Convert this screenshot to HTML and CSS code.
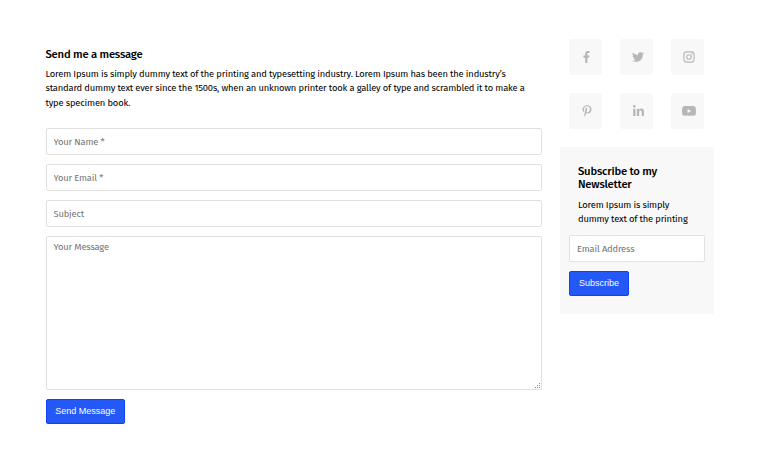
FILE: index.html
```html
<!DOCTYPE html>
<html lang="en">
<head>
<meta charset="utf-8">
<title>Contact</title>
<link rel="stylesheet" href="styles.css">
</head>
<body>
<main class="page">
  <form class="contact">
    <h2 class="title contact-title">Send me a message</h2>
    <p class="copy intro">Lorem Ipsum is simply dummy text of the printing and typesetting industry. Lorem Ipsum has been the industry’s<br>standard dummy text ever since the 1500s, when an unknown printer took a galley of type and scrambled it to make a<br>type specimen book.</p>
    <input class="field" type="text" placeholder="Your Name *">
    <input class="field" type="text" placeholder="Your Email *">
    <input class="field" type="text" placeholder="Subject">
    <div class="message-wrap">
      <textarea class="field message" placeholder="Your Message"></textarea>
      <svg class="grip" viewBox="0 0 6 6"><path d="M4 0h1v1H4zM2 2h1v1H2zM4 2h1v1H4zM0 4h1v1H0zM2 4h1v1H2zM4 4h1v1H4z"/></svg>
    </div>
    <button class="button send" type="button">Send Message</button>
  </form>
  <aside class="side">
    <nav class="social">
      <a class="tile" aria-label="Facebook"><svg class="fb" viewBox="0 0 264 512"><path d="M76.7 512V283H0v-91h76.7v-71.7C76.7 42.4 124.3 0 193.8 0c33.3 0 61.9 2.5 70.2 3.6V85h-48.2c-37.8 0-45.1 18-45.1 44.3V192H256l-11.7 91h-73.6v229"/></svg></a>
      <a class="tile" aria-label="Twitter"><svg class="tw" viewBox="0 0 512 512"><path d="M459.37 151.716c.325 4.548.325 9.097.325 13.645 0 138.72-105.583 298.558-298.558 298.558-59.452 0-114.68-17.219-161.137-47.106 8.447.974 16.568 1.299 25.34 1.299 49.055 0 94.213-16.568 130.274-44.832-46.132-.975-84.792-31.188-98.112-72.772 6.498.974 12.995 1.624 19.818 1.624 9.421 0 18.843-1.3 27.614-3.573-48.081-9.747-84.143-51.98-84.143-102.985v-1.299c13.969 7.797 30.214 12.67 47.431 13.319-28.264-18.843-46.781-51.005-46.781-87.391 0-19.492 5.197-37.36 14.294-52.954 51.655 63.675 129.3 105.258 216.365 109.807-1.624-7.797-2.599-15.918-2.599-24.04 0-57.828 46.782-104.934 104.934-104.934 30.213 0 57.502 12.67 76.67 33.137 23.715-4.548 46.456-13.32 66.599-25.34-7.798 24.366-24.366 44.833-46.132 57.827 21.117-2.273 41.584-8.122 60.426-16.243-14.292 20.791-32.161 39.308-52.628 54.253z"/></svg></a>
      <a class="tile" aria-label="Instagram"><svg class="ig" viewBox="0 0 12 12"><rect x=".9" y=".9" width="10.2" height="10.2" rx="2.8"/><circle cx="6" cy="6" r="2.3"/><path d="M9 2.500v1M8.500 3h1"/></svg></a>
      <a class="tile" aria-label="Pinterest"><svg class="pi" viewBox="0 0 384 512"><path d="M204 6.5C101.4 6.5 0 74.9 0 185.6 0 256 39.6 296 63.6 296c9.9 0 15.6-27.6 15.6-35.4 0-9.3-23.7-29.1-23.7-67.8 0-80.4 61.2-137.4 140.4-137.4 68.1 0 118.5 38.7 118.5 109.8 0 53.1-21.3 152.7-90.3 152.7-24.9 0-46.2-18-46.2-43.8 0-37.8 26.4-74.4 26.4-113.4 0-66.2-93.9-54.2-93.9 25.8 0 16.8 2.1 35.4 9.6 50.7-13.8 59.4-42 147.9-42 209.1 0 18.9 2.7 37.5 4.5 56.4 3.4 3.8 1.7 3.4 6.9 1.5 50.4-69 48.6-82.5 71.4-172.8 12.3 23.4 44.1 36 69.3 36 106.2 0 153.9-103.5 153.9-196.8C384 71.3 298.2 6.5 204 6.5z"/></svg></a>
      <a class="tile" aria-label="LinkedIn"><svg class="li" viewBox="0 -32 448 448"><path d="M100.3 416H7.4V116.9h92.9zM53.8 76.100C24.100 76.100 0 51.500 0 21.800a53.800 53.800 0 0 1 107.600 0c0 29.700-24.100 54.300-53.800 54.300zM447.900 416h-92.700V270.400c0-34.700-.7-79.200-48.300-79.200-48.300 0-55.700 37.700-55.700 76.700V416h-92.800V116.900h89.100v40.800h1.300c12.400-23.500 42.700-48.300 87.900-48.300 94 0 111.300 61.900 111.300 142.300V416z"/></svg></a>
      <a class="tile" aria-label="YouTube"><svg class="yt" viewBox="14 64 548 384"><path d="M549.655 124.083c-6.281-23.650-24.787-42.276-48.284-48.597C458.781 64 288 64 288 64S117.220 64 74.629 75.486c-23.497 6.322-42.003 24.947-48.284 48.597-11.412 42.867-11.412 132.305-11.412 132.305s0 89.438 11.412 132.305c6.281 23.650 24.787 41.500 48.284 47.821C117.220 448 288 448 288 448s170.780 0 213.371-11.486c23.497-6.321 42.003-24.171 48.284-47.821 11.412-42.867 11.412-132.305 11.412-132.305s0-89.438-11.412-132.305zm-317.510 213.508V175.185l142.739 81.205-142.739 81.201z"/></svg></a>
    </nav>
    <form class="newsletter">
      <h2 class="title news-title">Subscribe to my<br>Newsletter</h2>
      <p class="copy news-copy">Lorem Ipsum is simply<br>dummy text of the printing</p>
      <input class="field email" type="text" placeholder="Email Address">
      <button class="button subscribe" type="button">Subscribe</button>
    </form>
  </aside>
</main>
</body>
</html>
```
FILE: styles.css
```css
* { box-sizing: border-box; }
body { margin: 0; background: #fff; color: #111; font-family: "Fira Sans", "Noto Sans", sans-serif; }
.page { display: flex; gap: 18px; padding: 39px 46px 0 45.5px; align-items: flex-start; }
.contact { width: 496.5px; padding-top: 9px; }
.title { margin: 0; font-size: 11.3px; font-weight: 500; line-height: 13px; letter-spacing: -.23px; white-space: nowrap; color: #000; }
.copy { margin: 0; font-size: 9.4px; font-weight: 400; line-height: 14.4px; letter-spacing: -.175px; white-space: nowrap; color: #000; }
.intro { padding-top: 6px; margin-bottom: 17.800px; }
.field {
  display: block; width: 100%; height: 27px; margin: 0 0 9px; padding: 0 7px;
  border: 1px solid #e1e1e1; border-radius: 2px; background: #fff; outline: 0;
  font: 400 9.4px "Fira Sans", "Noto Sans", sans-serif; letter-spacing: -.175px;
}
.field::placeholder { color: #757575; opacity: 1; }
.message-wrap { position: relative; margin-bottom: 9px; }
.message { height: 154px; margin: 0; padding-top: 4px; resize: none; }
.grip { position: absolute; right: 1px; bottom: 1px; width: 6px; height: 6px; fill: #888; }
.button {
  display: block; height: 25px; padding: 0; border: 1px solid #0d43f0; border-radius: 2px;
  background: #2459f8; color: #fff; font: 9px/23px "Liberation Sans", sans-serif;
}
.send { width: 79.500px; }
.side { width: 154px; }
.social { display: grid; grid-template-columns: repeat(3, 33px); gap: 18px; padding-left: 9px; margin-bottom: 18px; }
.tile { display: flex; align-items: center; justify-content: center; height: 36px; border-radius: 3px; background: #f8f8f8; }
.tile svg { fill: #b7b7b7; }
.fb { width: 7px; height: 12px; margin: 0 0 1px 2px; }
.tw { width: 12px; height: 12px; margin: 0 0 1px 3px; }
.ig { width: 12px; height: 12px; margin: 0 0 1px 3px; stroke: #b7b7b7; stroke-width: 1.1; }
.tile .ig { fill: none; }
.ig path { stroke-width: .9; }
.pi { width: 10px; height: 12px; margin: 0 0 1px 3px; }
.li { width: 11px; height: 11px; margin: 0 0 2px 3px; }
.yt { width: 14px; height: 10px; margin: 0 0 1px 3px; }
.newsletter { height: 167px; padding: 18px 9px 0; background: #f8f8f8; }
.news-title { padding-left: 9px; }
.news-copy { padding: 7px 0 0 9px; margin-bottom: 8px; }
.subscribe { width: 60px; }
```
